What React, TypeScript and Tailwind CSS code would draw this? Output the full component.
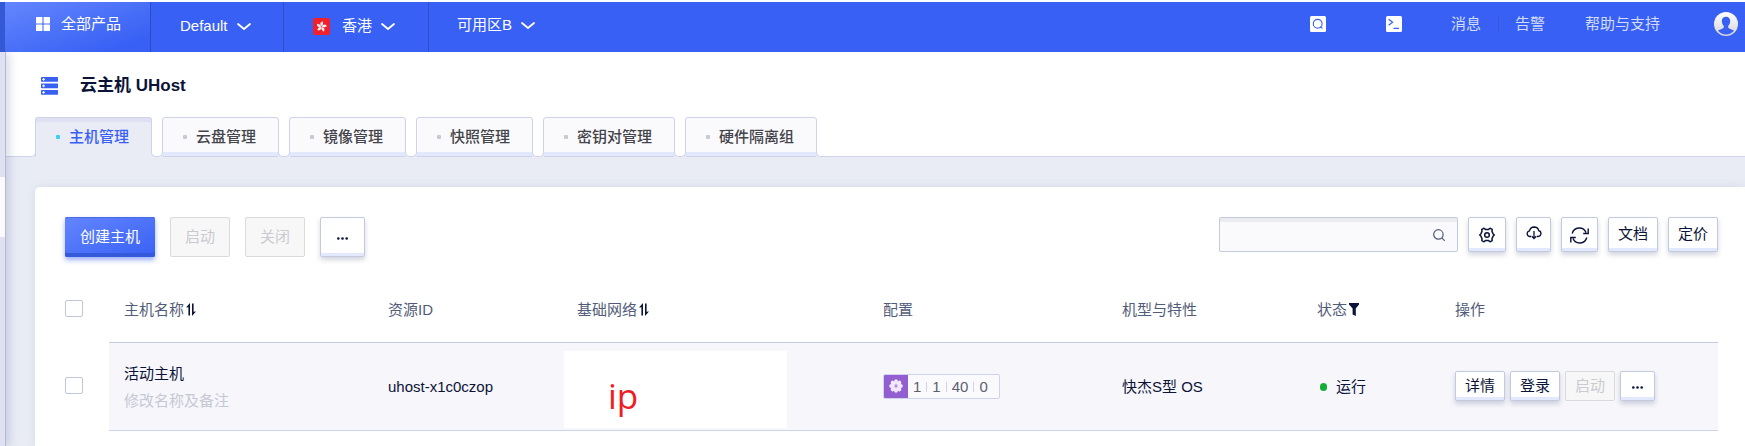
import { Fragment, type ReactNode } from 'react';

const raised =
  'border border-[#c3cade] rounded-[2px] bg-white text-[#0b1337] shadow-[inset_0_-3px_0_#e2e8fd,0_3px_5px_rgba(60,70,110,0.22)] flex items-center justify-center';
const disabledBtn =
  'border border-[#dadada] rounded-[2px] bg-[#f7f7f7] text-[#c9cbd0] flex items-center justify-center';

function Chevron() {
  return (
    <svg className="ml-[9px] h-4 w-[14px]" viewBox="0 0 14 16" fill="none" stroke="#fff" strokeWidth="1.8">
      <path d="M1 6l6 5 6-5" strokeLinecap="round" strokeLinejoin="round" />
    </svg>
  );
}

function GridIcon() {
  return (
    <svg className="h-[14px] w-[14px]" viewBox="0 0 14 14" fill="#fff">
      <rect width="6.4" height="6.4" rx="0.6" />
      <rect x="7.6" width="6.4" height="6.4" rx="0.6" />
      <rect y="7.6" width="6.4" height="6.4" rx="0.6" />
      <rect x="7.6" y="7.6" width="6.4" height="6.4" rx="0.6" />
    </svg>
  );
}

function FlagIcon() {
  return (
    <svg className="h-[17px] w-[17px]" viewBox="0 0 17 17">
      <rect width="17" height="17" rx="2" fill="#f0202c" />
      <g fill="#fff" fillOpacity="0.92" transform="translate(8.5 8.6)">
        {[0, 72, 144, 216, 288].map((a) => (
          <path key={a} transform={`rotate(${a + 12})`} d="M0 -0.4C-2.6 -1.8 -2.2 -5 0.6 -5.4C-0.3 -4 2.4 -3 0 -0.4Z" />
        ))}
      </g>
    </svg>
  );
}

function SearchBadge() {
  return (
    <svg className="h-4 w-4" viewBox="0 0 16 16" fill="none">
      <rect width="16" height="16" rx="1.5" fill="#fff" />
      <circle cx="7.7" cy="7.8" r="4.4" stroke="#3860f4" strokeWidth="1.1" />
      <path d="M10 10.8l2.6 1.6" stroke="#3860f4" strokeWidth="1.1" />
    </svg>
  );
}

function TerminalBadge() {
  return (
    <svg className="h-4 w-4" viewBox="0 0 16 16" fill="none">
      <rect width="16" height="16" rx="1.5" fill="#fff" />
      <path d="M2.6 3.2l4 3-4 3M7.5 12.3h5.5" stroke="#3860f4" strokeWidth="1.2" />
    </svg>
  );
}

function Avatar() {
  return (
    <svg className="h-6 w-6" viewBox="0 0 24 24">
      <defs>
        <linearGradient id="avatar-ring" x1="0" y1="0" x2="0" y2="1">
          <stop offset="0" stopColor="#fff" />
          <stop offset="1" stopColor="#d3d4da" />
        </linearGradient>
      </defs>
      <circle cx="12" cy="12" r="12" fill="url(#avatar-ring)" />
      <path
        d="M12 4.8c-2.700 0-4.200 1.800-4.200 4.300 0 2 .8 3.900 2 4.900v1.500c-.4 1-3.400 1.700-5.800 3.100a10.200 10.200 0 0 0 16 0c-2.400-1.400-5.400-2.100-5.800-3.100V14c1.200-1 2-2.900 2-4.900 0-2.500-1.500-4.300-4.200-4.300z"
        fill="#3860f4"
      />
    </svg>
  );
}

function ServerIcon() {
  return (
    <svg className="h-[18px] w-[17px]" viewBox="0 0 17 18">
      {[0, 6.5, 13].map((y) => (
        <g key={y}>
          <rect y={y} width="17" height="4.700" rx="0.600" fill="#3860f4" />
          <path d={`M2.600 ${y + 1}v2.700M1.200 ${y + 2.35}h2.800`} stroke="#fff" strokeWidth="1" />
        </g>
      ))}
    </svg>
  );
}

function SortIcon() {
  return (
    <svg className="ml-[2px] h-[13px] w-[10px]" viewBox="0 0 10 13">
      <path d="M0 4.500L4 0v12.500H2.400V4.200z" fill="#0b1337" />
      <path d="M10 8.500L6 13V.5h1.600v8.300z" fill="#0b1337" />
    </svg>
  );
}

function FilterIcon() {
  return (
    <svg className="ml-[2px] h-[13px] w-[10px]" viewBox="0 0 10 13" fill="#0b1337">
      <path d="M0 0h10v1.600L6.800 5.500V13L3.600 11.600V5.500L0 1.600z" />
    </svg>
  );
}

function GearIcon() {
  return (
    <svg className="h-4 w-4" viewBox="0 0 16 16" fill="none" stroke="#0b1337" strokeWidth="1.500" strokeLinejoin="round">
      <path d="M5 1.200L6.400 2.400h3.200L11 1.200l2.200 1.200-.2 2L14.200 7l1.100 1-1.100 1L13 11.600l.2 2L11 14.800 9.600 13.600H6.400L5 14.800l-2.200-1.200.2-2L1.800 9 .7 8l1.100-1L3 4.400l-.2-2z" />
      <circle cx="8" cy="8" r="2.300" />
    </svg>
  );
}

function CloudIcon() {
  return (
    <svg className="h-[14px] w-4" viewBox="0 0 16 14" fill="none" stroke="#0b1337" strokeWidth="1.300">
      <path d="M5.200 10.500H3.600A2.900 2.900 0 0 1 3.500 4.800 4.800 4.800 0 0 1 8 1c2.500 0 4.300 1.500 4.700 3.600a3 3 0 0 1-.6 5.900h-1.300" />
      <path d="M8 5v7.500M5.800 10.200L8 12.600l2.200-2.400" />
    </svg>
  );
}

function RefreshIcon() {
  return (
    <svg className="mt-1 h-[17px] w-[19px]" viewBox="0 0 19 17" fill="none" stroke="#0b1337" strokeWidth="1.400">
      <path d="M2.200 6.500A7.300 7.300 0 0 1 16 5.500M18.200 1.500v5h-5" />
      <path d="M16.800 10.500A7.300 7.300 0 0 1 3 11.500M.8 15.500v-5h5" />
    </svg>
  );
}

function DotsIcon() {
  return (
    <svg className="mt-[2px] h-[3px] w-[11px]" viewBox="0 0 11 3" fill="#0b1337">
      <circle cx="1.300" cy="1.500" r="1.300" />
      <circle cx="5.500" cy="1.500" r="1.300" />
      <circle cx="9.700" cy="1.500" r="1.300" />
    </svg>
  );
}

function FlowerIcon() {
  return (
    <svg className="mb-[2px] h-[14px] w-[14px]" viewBox="-7 -7 14 14">
      <g fill="#f3ebfb">
        {[0, 45, 90, 135, 180, 225, 270, 315].map((a) => (
          <ellipse key={a} cx="0" cy="-4.500" rx="1.900" ry="2.300" transform={`rotate(${a})`} />
        ))}
        <circle r="3.600" fillOpacity="0.850" />
      </g>
      <circle r="1.400" fill="#b48be0" />
    </svg>
  );
}

const tabs = ['主机管理', '云盘管理', '镜像管理', '快照管理', '密钥对管理', '硬件隔离组'];
const specs = ['1', '1', '40', '0'];

function Th({ children }: { children: ReactNode }) {
  return (
    <th scope="col" className="h-[66px] border-b border-[#c3cade] px-[15px] text-left font-normal text-[#525c78]">
      <div className="flex items-center">{children}</div>
    </th>
  );
}

function Td({ children }: { children: ReactNode }) {
  return <td className="border-b border-[#d0d3ea] bg-[#f6f6fb] px-[15px]">{children}</td>;
}

function Check({ label }: { label: string }) {
  return (
    <input
      type="checkbox"
      aria-label={label}
      className="block h-[17px] w-[18px] appearance-none rounded-[2px] border border-[#c0c6da] bg-white checked:bg-[#3860f4]"
    />
  );
}

function TopBar() {
  return (
    <header className="mt-[2px] flex h-[50px] text-white">
      <div className="w-[5px] shrink-0 bg-[#3359d6]" />
      <div className="flex flex-1 items-stretch bg-[#3860f4]">
        <button className="flex w-[146px] items-center border-r border-[#2c4cc4] bg-linear-to-br from-[#6485fd] to-[#3860f4] to-85% pb-[6px] pl-[31px]">
          <GridIcon />
          <span className="ml-[11px]">全部产品</span>
        </button>
        <button className="flex w-[133px] items-center border-r border-[#2e50c8] pb-[2px] pl-[29px]">
          Default
          <Chevron />
        </button>
        <button className="flex w-[145px] items-center border-r border-[#2e50c8] pb-[2px] pl-[29px]">
          <FlagIcon />
          <span className="ml-3">香港</span>
          <Chevron />
        </button>
        <button className="flex items-center pb-1 pl-7">
          可用区B
          <Chevron />
        </button>
        <nav className="ml-auto flex items-center pr-[7px] pb-[6px] text-[#d3dcfe]">
          <button aria-label="搜索">
            <SearchBadge />
          </button>
          <button aria-label="终端" className="ml-[60px]">
            <TerminalBadge />
          </button>
          <a href="#messages" className="ml-[49px]">消息</a>
          <span className="mr-4 ml-[17px] h-[14px] w-px bg-[#3556d8]" />
          <a href="#alerts">告警</a>
          <a href="#help" className="ml-10">帮助与支持</a>
          <button aria-label="账户" className="ml-[54px]">
            <Avatar />
          </button>
        </nav>
      </div>
    </header>
  );
}

function TabBar() {
  return (
    <nav className="flex h-10">
      <span className="h-[6px] w-[30px] self-end bg-[#e9ecf5]">
        <span className="block h-full rounded-br-[5px] border-r border-b border-[#cfd3e9] bg-white" />
      </span>
      {tabs.map((tab, i) => (
        <Fragment key={tab}>
          {i > 0 && (
            <span className="z-10 -mx-px h-[6px] w-3 self-end bg-[#e4e9f9]">
              <span className="block h-full rounded-b-[5px] border-x border-b border-[#cfd3e9] bg-white" />
            </span>
          )}
          <button
            className={
              i === 0
                ? '-ml-px flex items-center rounded-t-[3px] border border-[#cfd3e9] border-b-[#e9ecf5] bg-[#e9ecf5] pr-[22px] pl-5 font-medium text-[#3860f4] shadow-[inset_0_4px_0_#dfe0f1]'
                : 'flex items-center rounded-t-[3px] border border-[#cfd3e9] bg-[#fafafc] pr-[22px] pl-5 font-medium text-[#43434a] shadow-[inset_0_-4px_0_#e2e9fd]'
            }
          >
            <span className={i === 0 ? 'h-1 w-1 rounded-[1px] bg-[#3ad0f3]' : 'h-1 w-1 rounded-[1px] bg-[#c8cad3]'} />
            <span className="ml-[9px]">{tab}</span>
          </button>
        </Fragment>
      ))}
      <span className="-ml-px h-[6px] flex-1 self-end bg-[#e4e9f9]">
        <span className="block h-full rounded-bl-[5px] border-b border-l border-[#cfd3e9] bg-white" />
      </span>
    </nav>
  );
}

function Toolbar() {
  return (
    <div className="flex items-start justify-between">
      <div className="flex gap-[15px]">
        <button className="h-10 w-[90px] rounded-[2px] bg-linear-to-br from-[#6485fd] to-[#3860f4] text-white shadow-[inset_0_-4px_0_#3459d9,inset_0_1px_0_#4a6be6,0_3px_5px_rgba(56,96,244,0.5)]">
          创建主机
        </button>
        <button disabled className={`${disabledBtn} h-10 w-[60px]`}>启动</button>
        <button disabled className={`${disabledBtn} h-10 w-[60px]`}>关闭</button>
        <button aria-label="更多" className={`${raised} h-10 w-[45px]`}>
          <DotsIcon />
        </button>
      </div>
      <div className="flex gap-[10px]">
        <div className="flex h-[35px] w-[239px] items-center rounded-[2px] border border-[#c3cade] bg-[#fafafc] pr-[12px] shadow-[inset_0_4px_0_#ebecf0]">
          <input type="text" aria-label="搜索主机" className="min-w-0 flex-1 bg-transparent px-3 outline-none" />
          <svg className="h-3 w-3" viewBox="0 0 12 12" fill="none" stroke="#525c78" strokeWidth="1.200">
            <circle cx="5.400" cy="5.400" r="4.700" />
            <path d="M8.800 8.800l2.900 2.900" />
          </svg>
        </div>
        <button aria-label="设置" className={`${raised} h-[35px] w-[38px]`}>
          <GearIcon />
        </button>
        <button aria-label="下载" className={`${raised} h-[35px] w-[35px] pb-1`}>
          <CloudIcon />
        </button>
        <button aria-label="刷新" className={`${raised} h-[35px] w-[37px] pb-[2px]`}>
          <RefreshIcon />
        </button>
        <button className={`${raised} h-[35px] w-[50px] pb-[2px]`}>文档</button>
        <button className={`${raised} h-[35px] w-[50px] pb-[2px]`}>定价</button>
      </div>
    </div>
  );
}

function HostTable() {
  return (
    <table className="mt-5 w-full table-fixed border-separate border-spacing-0 text-[#0b1337]">
      <colgroup>
        <col className="w-[44px]" />
        <col className="w-[264px]" />
        <col className="w-[189px]" />
        <col className="w-[306px]" />
        <col className="w-[239px]" />
        <col className="w-[195px]" />
        <col className="w-[138px]" />
        <col />
      </colgroup>
      <thead>
        <tr>
          <td className="pb-1">
            <Check label="全选" />
          </td>
          <Th>主机名称<SortIcon /></Th>
          <Th>资源ID</Th>
          <Th>基础网络<SortIcon /></Th>
          <Th>配置</Th>
          <Th>机型与特性</Th>
          <Th>状态<FilterIcon /></Th>
          <Th>操作</Th>
        </tr>
      </thead>
      <tbody>
        <tr className="h-[88px]">
          <td className="pb-1">
            <Check label="选择 活动主机" />
          </td>
          <Td>
            <div className="leading-[27px]">活动主机</div>
            <div className="leading-[27px] text-[#c6c9d3]">修改名称及备注</div>
          </Td>
          <Td>uhost-x1c0czop</Td>
          <td className="border-b border-[#d0d3ea] bg-[#f6f6fb] pt-[8px] pb-[2px] pl-[2px]">
            <div className="flex h-[77px] w-[223px] items-center bg-white pt-3 pl-[44px] font-['Open_Sans',sans-serif] text-[35px] leading-none text-[#ee1c24]">
              ip
            </div>
          </td>
          <Td>
            <div className="flex h-[25px] w-[117px] overflow-hidden rounded-[2px] border border-[#cfd3ee] bg-[#fafafc] text-[#5a6070]">
              <span className="-my-px -ml-px flex w-[25px] items-center justify-center bg-[#935fd0]">
                <FlowerIcon />
              </span>
              <span className="flex items-center pl-[5px]">
                {specs.map((s, i) => (
                  <Fragment key={i}>
                    {i > 0 && <span className="mx-[5px] h-[10px] w-px bg-[#cfd3ee]" />}
                    <span>{s}</span>
                  </Fragment>
                ))}
              </span>
            </div>
          </Td>
          <Td>快杰S型 OS</Td>
          <Td>
            <div className="flex items-center pl-[3px]">
              <span className="mr-[9px] h-2 w-[7px] rounded-full bg-[#16ad37]" />
              运行
            </div>
          </Td>
          <Td>
            <div className="flex gap-[5px] pb-px">
              <button className={`${raised} h-[30px] w-[50px]`}>详情</button>
              <button className={`${raised} h-[30px] w-[50px]`}>登录</button>
              <button disabled className={`${disabledBtn} h-[30px] w-[50px]`}>启动</button>
              <button aria-label="更多操作" className={`${raised} h-[30px] w-[35px]`}>
                <DotsIcon />
              </button>
            </div>
          </Td>
        </tr>
      </tbody>
    </table>
  );
}

export default function App() {
  return (
    <div className="flex min-h-screen flex-col bg-white font-['Liberation_Sans','Noto_Sans_CJK_SC',sans-serif] text-[15px] leading-5">
      <TopBar />
      <div className="flex flex-1">
        <aside className="z-10 w-[6px] shrink-0 border-r border-[#b3bbd4] bg-[#dfe0f1] pt-[125px] shadow-[2px_0_10px_rgba(80,95,150,0.35)]">
          <div className="h-[60px] bg-[#fbfbff]" />
        </aside>
        <main className="flex min-w-0 flex-1 flex-col bg-[#e9ecf5]">
          <div className="bg-white">
            <div className="flex h-[65px] items-center pt-[3px] pl-[35px]">
              <ServerIcon />
              <h1 className="ml-[22px] text-[17px] leading-6 font-bold text-[#0b1337]">云主机 UHost</h1>
            </div>
            <TabBar />
          </div>
          <section className="mt-[30px] ml-[29px] flex-1 rounded-tl-[5px] bg-white pt-[30px] pr-[27px] pb-[15px] pl-[30px] shadow-[0_0_10px_rgba(80,95,150,0.12)]">
            <Toolbar />
            <HostTable />
          </section>
        </main>
      </div>
    </div>
  );
}
